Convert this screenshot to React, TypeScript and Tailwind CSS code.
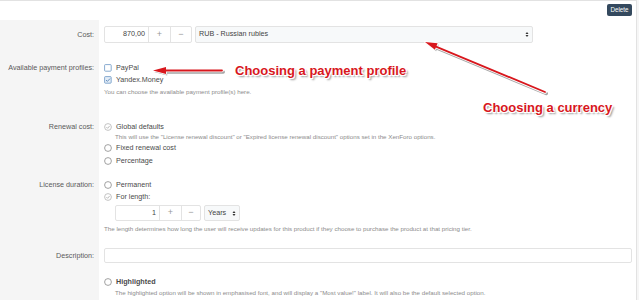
import React from "react";

const Radio = ({ checked }: { checked?: boolean }) => (
  <svg width="8" height="8" viewBox="0 0 8 8" className="shrink-0">
    <circle cx="4" cy="4" r="3.4" fill="#fff" stroke={checked ? "#b5b5b5" : "#8a8a8a"} strokeWidth="0.8" />
    {checked && <path d="M2.4 4.1 L3.6 5.3 L5.7 2.9" fill="none" stroke="#a8a8a8" strokeWidth="0.8" />}
  </svg>
);

const Check = ({ checked }: { checked?: boolean }) => (
  <svg width="8" height="8" viewBox="0 0 8 8" className="shrink-0">
    <rect x="0.6" y="0.6" width="6.6" height="6.6" rx="0.8" fill={checked ? "#e3edf7" : "#fff"} stroke="#6a96c4" strokeWidth="0.8" />
    {checked && <path d="M2 4 L3.4 5.4 L6 2.6" fill="none" stroke="#5a86b8" strokeWidth="0.9" />}
  </svg>
);

const SelArrow = () => (
  <svg width="4" height="7" viewBox="0 0 4 7" className="shrink-0">
    <path d="M0.5 3 L2 1 L3.5 3 Z" fill="#333" />
    <path d="M0.5 4 L2 6 L3.5 4 Z" fill="#333" />
  </svg>
);

const Label = ({ children, lh }: { children: React.ReactNode; lh: string }) => (
  <div className={`w-[99px] shrink-0 bg-[#f5f5f5] pt-[6px] pr-[5px] text-right text-[#5a5a5a] ${lh}`}>{children}</div>
);

const Option = ({ checked, children, box, bold }: { checked?: boolean; children: React.ReactNode; box?: boolean; bold?: boolean }) => (
  <div className="flex h-[12px] items-center gap-[4px]">
    {box ? <Check checked={checked} /> : <Radio checked={checked} />}
    <span className={bold ? "font-bold text-[#4a4a4a]" : "text-[#4a4a4a]"}>{children}</span>
  </div>
);

export default function App() {
  return (
    <div className="relative h-[300px] w-[639px] overflow-hidden bg-[#f6f6f6] font-['Liberation_Sans',Arial,sans-serif] text-[7.2px]">
      <div className="w-[637px] border-r border-t border-[#e2e2e2] bg-white">
        {/* top bar */}
        <div className="flex h-[19px] items-start justify-end pr-[4px] pt-[3px]">
          <div className="flex h-[12px] w-[25px] items-center justify-center rounded-[2px] bg-[#34495e] text-[6.3px] text-white">Delete</div>
        </div>

        {/* Cost */}
        <div className="flex">
          <Label lh="leading-[17px]">Cost:</Label>
          <div className="flex flex-1 items-start pb-[13px] pl-[5px] pt-[6px]">
            <div className="flex h-[17px] w-[88px] rounded-[2px] border border-[#e3e3e3] bg-white text-[#444]">
              <div className="flex w-[43px] items-center justify-end pr-[3px]">870,00</div>
              <div className="flex w-[22px] items-center justify-center border-l border-[#e3e3e3] text-[9px] text-[#999]">+</div>
              <div className="flex flex-1 items-center justify-center border-l border-[#e3e3e3] text-[9px] text-[#999]">−</div>
            </div>
            <div className="ml-[3px] flex h-[17px] w-[338px] items-center justify-between rounded-[2px] border border-[#e3e3e3] bg-[#f7f9fa] pl-[3px] pr-[3px] text-[#444]">
              <span>RUB - Russian rubles</span>
              <SelArrow />
            </div>
          </div>
        </div>

        {/* Payment profiles */}
        <div className="flex">
          <Label lh="leading-[12px]">Available payment profiles:</Label>
          <div className="flex-1 pb-[18px] pl-[5px] pt-[6px]">
            <Option box>PayPal</Option>
            <Option box checked>Yandex.Money</Option>
            <div className="mt-[1px] text-[6.2px] leading-[10px] text-[#8c8c8c]">You can choose the available payment profile(s) here.</div>
          </div>
        </div>

        {/* Renewal cost */}
        <div className="flex">
          <Label lh="leading-[12px]">Renewal cost:</Label>
          <div className="flex-1 pb-[6px] pl-[5px] pt-[6px]">
            <Option checked>Global defaults</Option>
            <div className="pl-[11px] text-[6.2px] leading-[8px] text-[#8c8c8c]">
              This will use the "License renewal discount" or "Expired license renewal discount" options set in the XenForo options.
            </div>
            <div className="mt-[1px]">
              <Option>Fixed renewal cost</Option>
            </div>
            <div className="mt-[1px]">
              <Option>Percentage</Option>
            </div>
          </div>
        </div>

        {/* License duration */}
        <div className="flex">
          <Label lh="leading-[12px]">License duration:</Label>
          <div className="flex-1 pb-[8px] pl-[5px] pt-[6px]">
            <Option>Permanent</Option>
            <Option checked>For length:</Option>
            <div className="ml-[11px] mt-[2px] flex">
              <div className="flex h-[16px] w-[86px] rounded-[2px] border border-[#e3e3e3] bg-white text-[#444]">
                <div className="flex w-[43px] items-center justify-end pr-[3px]">1</div>
                <div className="flex w-[22px] items-center justify-center border-l border-[#e3e3e3] text-[9px] text-[#999]">+</div>
                <div className="flex flex-1 items-center justify-center border-l border-[#e3e3e3] text-[9px] text-[#999]">−</div>
              </div>
              <div className="ml-[3px] flex h-[16px] w-[36px] items-center justify-between rounded-[2px] border border-[#e3e3e3] bg-[#f7f9fa] pl-[3px] pr-[3px] text-[#444]">
                <span>Years</span>
                <SelArrow />
              </div>
            </div>
            <div className="mt-[3px] text-[6.2px] leading-[10px] text-[#8c8c8c]">
              The length determines how long the user will receive updates for this product if they choose to purchase the product at that pricing tier.
            </div>
          </div>
        </div>

        {/* Description */}
        <div className="flex">
          <Label lh="leading-[15px]">Description:</Label>
          <div className="flex-1 pb-[7px] pl-[5px] pr-[4px] pt-[6px]">
            <div className="h-[15px] rounded-[2px] border border-[#e3e3e3] bg-white" />
          </div>
        </div>

        {/* Highlighted */}
        <div className="flex">
          <Label lh="leading-[12px]">&nbsp;</Label>
          <div className="flex-1 pb-[10px] pl-[5px] pt-[6px]">
            <Option bold>Highlighted</Option>
            <div className="pl-[11px] text-[6.2px] leading-[9px] text-[#8c8c8c]">
              The highlighted option will be shown in emphasised font, and will display a "Most value!" label. It will also be the default selected option.
            </div>
          </div>
        </div>
      </div>

      {/* annotations */}
      <svg className="pointer-events-none absolute left-0 top-0" width="639" height="300" viewBox="0 0 639 300">
        <g opacity="0.35" transform="translate(1.2,1.5)">
          <line x1="222" y1="70.5" x2="164" y2="70.5" stroke="#000" strokeWidth="3.5" strokeLinecap="round" />
          <path d="M153 70.5 L166 67 L166 74 Z" fill="#000" />
          <line x1="545" y1="92" x2="436" y2="46.6" stroke="#000" strokeWidth="3.5" strokeLinecap="round" />
          <path d="M425 42 L437.6 43.3 L434.9 49.8 Z" fill="#000" />
        </g>
        <g>
          <line x1="222" y1="70.5" x2="164" y2="70.5" stroke="#fff" strokeWidth="3.6" strokeLinecap="round" />
          <path d="M153 70.5 L166 67 L166 74 Z" fill="#fff" stroke="#fff" strokeWidth="1.6" strokeLinejoin="round" />
          <line x1="545" y1="92" x2="436" y2="46.6" stroke="#fff" strokeWidth="3.6" strokeLinecap="round" />
          <path d="M425 42 L437.6 43.3 L434.9 49.8 Z" fill="#fff" stroke="#fff" strokeWidth="1.6" strokeLinejoin="round" />
          <line x1="222" y1="70.5" x2="164" y2="70.5" stroke="#d8171d" strokeWidth="1.8" strokeLinecap="round" />
          <path d="M153 70.5 L166 67 L166 74 Z" fill="#d8171d" />
          <line x1="545" y1="92" x2="436" y2="46.6" stroke="#d8171d" strokeWidth="1.8" strokeLinecap="round" />
          <path d="M425 42 L437.6 43.3 L434.9 49.8 Z" fill="#d8171d" />
        </g>
      </svg>
      <div className="pointer-events-none absolute left-[235px] top-[63px] text-[13px] font-bold leading-[16px] text-[#d8171d] [text-shadow:-1px_-1px_0_#fff,1px_-1px_0_#fff,-1px_1px_0_#fff,1px_1px_0_#fff,0_-1px_0_#fff,0_1px_0_#fff,2px_2px_2px_rgba(0,0,0,0.45)]">
        Choosing a payment profile
      </div>
      <div className="pointer-events-none absolute left-[483px] top-[100px] text-[13px] font-bold leading-[16px] text-[#d8171d] [text-shadow:-1px_-1px_0_#fff,1px_-1px_0_#fff,-1px_1px_0_#fff,1px_1px_0_#fff,0_-1px_0_#fff,0_1px_0_#fff,2px_2px_2px_rgba(0,0,0,0.45)]">
        Choosing a currency
      </div>
    </div>
  );
}
